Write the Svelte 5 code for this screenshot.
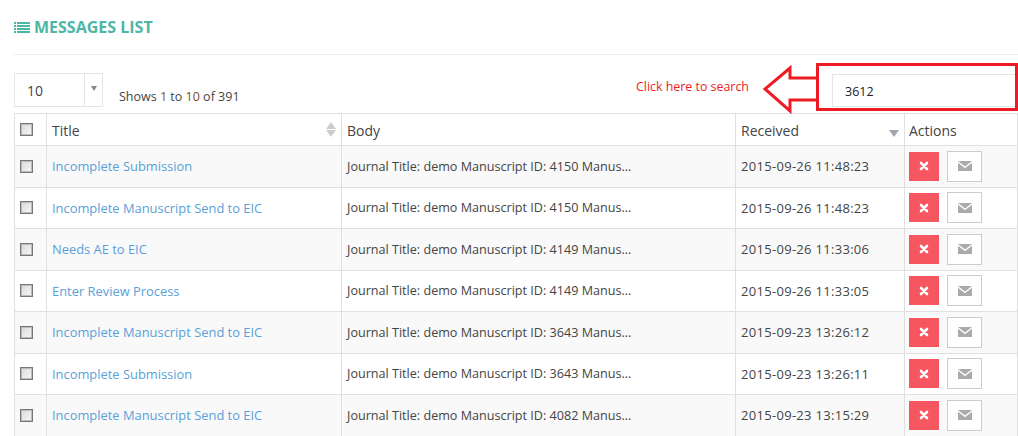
<script>
  const rows = [
    { title: 'Incomplete Submission', id: 4150, at: '2015-09-26 11:48:23' },
    { title: 'Incomplete Manuscript Send to EIC', id: 4150, at: '2015-09-26 11:48:23' },
    { title: 'Needs AE to EIC', id: 4149, at: '2015-09-26 11:33:06' },
    { title: 'Enter Review Process', id: 4149, at: '2015-09-26 11:33:05' },
    { title: 'Incomplete Manuscript Send to EIC', id: 3643, at: '2015-09-23 13:26:12' },
    { title: 'Incomplete Submission', id: 3643, at: '2015-09-23 13:26:11' },
    { title: 'Incomplete Manuscript Send to EIC', id: 4082, at: '2015-09-23 13:15:29' }
  ];
</script>

<div class="page">
  <h2 class="heading">
    <svg class="list-icon" width="16" height="12" viewBox="0 0 16 12" fill="currentColor">
      <path d="M0 1h2v2H0zM3 1h13v2H3zM0 4h2v2H0zM3 4h13v2H3zM0 7h2v2H0zM3 7h13v2H3zM0 10h2v2H0zM3 10h13v2H3z"/>
    </svg>
    MESSAGES LIST
  </h2>

  <div class="toolbar">
    <div class="select">
      <span class="select-value">10</span>
      <span class="select-arrow"><i></i></span>
    </div>
    <div class="info">Shows <b>1</b> to <b>10</b> of 391</div>
    <input class="search" value="3612" />
  </div>

  <table>
    <colgroup>
      <col style="width:32px" />
      <col style="width:295px" />
      <col style="width:394px" />
      <col style="width:169px" />
      <col />
    </colgroup>
    <thead>
      <tr>
        <th class="check-col"><span class="check"></span></th>
        <th>Title<span class="sort both"><i class="up"></i><i class="down"></i></span></th>
        <th>Body</th>
        <th>Received<span class="sort"><i class="down"></i></span></th>
        <th>Actions</th>
      </tr>
    </thead>
    <tbody>
      {#each rows as row}
        <tr>
          <td><span class="check"></span></td>
          <td class="title"><a href="#top">{row.title}</a></td>
          <td class="body">Journal Title: demo Manuscript ID: {row.id} Manus...</td>
          <td class="date">{row.at}</td>
          <td>
            <div class="actions">
              <button class="del" aria-label="Delete">
                <svg width="10" height="10" viewBox="0 0 10 10"><path d="M2 2l6 6M8 2l-6 6" stroke="#fff" stroke-width="2.6" stroke-linecap="round"/></svg>
              </button>
              <button class="mail" aria-label="Send">
                <svg width="14" height="10" viewBox="0 0 14 10" fill="#aaa"><path d="M0 0h14L7 5.5zM0 1.8V10h14V1.8L7 7.2z"/></svg>
              </button>
            </div>
          </td>
        </tr>
      {/each}
    </tbody>
  </table>

  <div class="hint">Click here to search</div>
  <svg class="annotation" width="256" height="52" viewBox="0 0 256 52" fill="none" stroke="#ed1c24" stroke-width="3">
    <path d="M55 15H29V5L4 26l25 22V37h26" />
    <rect x="56.5" y="1.5" width="199" height="45" />
  </svg>
</div>

<style>
  :global(body) {
    margin: 0;
    background: #fff;
  }

  .page {
    position: relative;
    height: 436px;
    overflow: hidden;
    padding-left: 14px;
    box-sizing: border-box;
    font-family: "Open Sans", sans-serif;
    font-size: 13px;
    color: #444;
  }

  .heading {
    display: flex;
    align-items: center;
    gap: 4px;
    height: 55px;
    margin: 0;
    padding-bottom: 1px;
    box-sizing: border-box;
    border-bottom: 1px solid #eee;
    color: #4db6a5;
    font-size: 16px;
    font-weight: 700;
  }

  .toolbar {
    display: flex;
    height: 58px;
    padding-top: 18px;
    box-sizing: border-box;
  }

  .select {
    display: flex;
    width: 89px;
    height: 34px;
    border: 1px solid #e5e5e5;
    box-sizing: border-box;
    font-size: 14px;
  }

  .select-value {
    flex: 1;
    padding: 7px 0 0 12px;
  }

  .select-arrow {
    width: 18px;
    border-left: 1px solid #e5e5e5;
    display: flex;
    justify-content: center;
    padding-top: 12px;
    box-sizing: border-box;
  }

  .select-arrow i {
    width: 0;
    height: 0;
    border: 3px solid transparent;
    border-top: 5px solid #888;
  }

  .info {
    margin: 15px 0 0 16px;
    font-size: 12.5px;
  }

  .info b {
    font-weight: 400;
    color: #7a4a28;
  }

  .search {
    margin: 1px 0 0 auto;
    width: 186px;
    height: 33px;
    padding: 2px 0 0 12px;
    box-sizing: border-box;
    border: 1px solid #e5e5e5;
    border-right: 0;
    font: 12.5px "Open Sans", sans-serif;
    color: #222;
    outline: none;
  }

  table {
    width: 1004px;
    border-collapse: collapse;
    table-layout: fixed;
  }

  th, td {
    border: 1px solid #e0e0e0;
    padding: 0 5px;
    text-align: left;
    white-space: nowrap;
  }

  th {
    position: relative;
    height: 29px;
    padding-top: 2px;
    font-size: 14px;
    font-weight: 500;
    color: #444;
  }

  th.check-col {
    padding-top: 0;
    height: 31px;
  }

  th:last-child, td:last-child {
    padding-left: 4px;
  }

  td {
    height: 40.5px;
    font-size: 12.6px;
  }

  td.title {
    font-size: 12.9px;
  }

  td.date {
    font-size: 13px;
    letter-spacing: 0.3px;
  }

  tbody tr:nth-child(odd) {
    background: #f9f9f9;
  }

  a {
    color: #5a9fd8;
    text-decoration: none;
  }

  .check {
    display: block;
    box-sizing: border-box;
    width: 13px;
    height: 13px;
    border: 1px solid #777;
    background: linear-gradient(135deg, #d8d8d8, #f8f8f8);
    box-shadow: inset 0 0 0 1px #bbb;
  }

  .sort {
    position: absolute;
    right: 5px;
    bottom: 8px;
    display: flex;
    flex-direction: column;
    gap: 1px;
  }

  .sort i {
    width: 0;
    height: 0;
    border: 5px solid transparent;
  }

  .sort .up {
    border-top: 0;
    border-bottom: 7px solid #ccc;
  }

  .sort .down {
    border-bottom: 0;
    border-top: 7px solid #a5a5ad;
  }

  .sort.both .down {
    border-top: 7px solid #ccc;
  }

  .actions {
    display: flex;
    align-items: center;
    gap: 8px;
  }

  .actions button {
    display: flex;
    align-items: center;
    justify-content: center;
    padding: 0;
    box-sizing: border-box;
  }

  .del {
    width: 30px;
    height: 29px;
    border: 0;
    background: #f6565f;
  }

  .mail {
    width: 35px;
    height: 31px;
    border: 1px solid #ccc;
    background: #fff;
  }

  .hint {
    position: absolute;
    left: 636px;
    top: 78px;
    font-size: 12.4px;
    color: #ed1c24;
  }

  .annotation {
    position: absolute;
    left: 761px;
    top: 63px;
    overflow: visible;
  }
</style>
